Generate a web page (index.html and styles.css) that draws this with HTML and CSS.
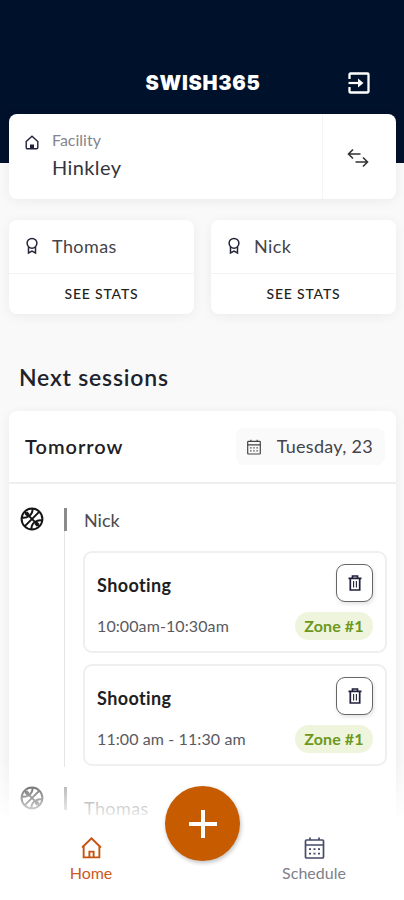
FILE: index.html
```html
<!DOCTYPE html>
<html lang="en">
<head>
    <meta charset="utf-8">
    <meta name="viewport" content="width=device-width, initial-scale=1">
    <title>Swish365</title>
    <link rel="stylesheet" href="styles.css">
</head>
<body>
    <!-- Shared icons -->
    <svg class="sprite" xmlns="http://www.w3.org/2000/svg">
        <symbol id="icon-house" viewBox="0 0 20 21">
            <path d="M1 10 L10 1.2 L19 10 M2.5 8.8 V19.5 H17.5 V8.8 M8 19.5 V14 H12 V19.5" fill="none" stroke="currentColor" stroke-width="1.8"/>
        </symbol>
        <symbol id="icon-house-small" viewBox="0 0 14 15">
            <path d="M1.2 6.500 L7 1.200 L12.800 6.500 V12.500 Q12.800 13.800 11.500 13.800 H2.500 Q1.200 13.800 1.200 12.500 Z" fill="none" stroke="currentColor" stroke-width="1.4"/>
            <path d="M5 14 V9.500 H9 V14 Z" fill="currentColor"/>
        </symbol>
        <symbol id="icon-award" viewBox="0 0 14 18">
            <circle cx="7" cy="6.3" r="4.9" fill="none" stroke="currentColor" stroke-width="1.5"/>
            <path d="M3.5 10 V16 L7 14.2 L10.5 16 V10" fill="none" stroke="currentColor" stroke-width="1.5"/>
        </symbol>
        <symbol id="icon-calendar" viewBox="0 0 20 22">
            <rect x="1" y="3" width="18" height="18" rx="1" fill="none" stroke="currentColor" stroke-width="1.7"/>
            <path d="M5.5 0.5 V3 M14.5 0.5 V3 M1 8 H19" fill="none" stroke="currentColor" stroke-width="1.7"/>
            <path d="M4.5 12.2 H6.5 M9 12.2 H11 M13.5 12.2 H15.5 M4.5 16.7 H6.5 M9 16.7 H11 M13.5 16.7 H15.5" stroke="currentColor" stroke-width="1.8"/>
        </symbol>
        <symbol id="icon-ball" viewBox="0 0 24 24">
            <g fill="none" stroke="currentColor" stroke-width="2">
                <circle cx="12" cy="12" r="10.4"/>
                <path d="M4.6 19.4 L19.400 4.600 M4.600 4.600 L19.400 19.400"/>
                <path d="M1.800 10.500 C6.500 11.500 13 8.500 12.500 1.800 M22.200 13.500 C17.500 12.500 11 15.500 11.500 22.200"/>
            </g>
            <path d="M4.500 7 L7.500 4.500 L9.500 7 L7 9.500 Z M19.500 17 L16.500 19.500 L14.500 17 L17 14.500 Z" fill="currentColor"/>
        </symbol>
        <symbol id="icon-trash" viewBox="0 0 14 16">
            <path d="M0.500 3.300 H13.500 M4.500 3 V1 H9.500 V3 M2.300 3.300 V15 H11.700 V3.300" fill="none" stroke="currentColor" stroke-width="1.7"/>
            <path d="M5.600 6 V12.500 M8.400 6 V12.500" stroke="currentColor" stroke-width="1.1"/>
        </symbol>
    </svg>

    <div class="app">
        <header class="hero">
            <h1 class="logo">SWISH365</h1>
            <svg class="logout" viewBox="0 0 22 22">
                <path d="M1.500 7 V2.500 Q1.500 1.500 2.500 1.500 H19.500 Q20.500 1.500 20.500 2.500 V19.500 Q20.500 20.500 19.500 20.500 H2.500 Q1.500 20.500 1.500 19.500 V15" fill="none" stroke="#fff" stroke-width="2.300"/>
                <path d="M0.500 11 H12" fill="none" stroke="#fff" stroke-width="2.200"/>
                <path d="M10 6.500 L15.500 11 L10 15.500 Z" fill="#fff"/>
            </svg>
        </header>

        <main class="content">
            <section class="card facility">
                <div class="facility-info">
                    <svg class="facility-icon"><use href="#icon-house-small"/></svg>
                    <div>
                        <div class="facility-label">Facility</div>
                        <div class="facility-name">Hinkley</div>
                    </div>
                </div>
                <div class="facility-switch">
                    <svg class="switch-icon" viewBox="0 0 22 20">
                        <path d="M13.500 6 H1.500 M6 1.500 L1.500 6 L6 10.500 M8.500 14 H20.500 M16 9.500 L20.500 14 L16 18.500" fill="none" stroke="#333" stroke-width="1.600"/>
                    </svg>
                </div>
            </section>

            <section class="players">
                <div class="card player">
                    <div class="player-top">
                        <svg class="award-icon"><use href="#icon-award"/></svg>
                        <span class="player-name">Thomas</span>
                    </div>
                    <div class="player-stats">SEE STATS</div>
                </div>
                <div class="card player">
                    <div class="player-top">
                        <svg class="award-icon"><use href="#icon-award"/></svg>
                        <span class="player-name">Nick</span>
                    </div>
                    <div class="player-stats">SEE STATS</div>
                </div>
            </section>

            <h2 class="section-title">Next sessions</h2>

            <section class="card sessions">
                <div class="sessions-header">
                    <span class="sessions-day">Tomorrow</span>
                    <div class="date">
                        <svg class="date-icon"><use href="#icon-calendar"/></svg>
                        <span class="date-text">Tuesday, 23</span>
                    </div>
                </div>

                <div class="group">
                    <svg class="ball-icon"><use href="#icon-ball"/></svg>
                    <div class="group-body">
                        <div class="group-name">Nick</div>
                        <div class="session">
                            <div class="session-row">
                                <span class="session-title">Shooting</span>
                                <button class="delete-btn"><svg class="trash-icon"><use href="#icon-trash"/></svg></button>
                            </div>
                            <div class="session-row">
                                <span class="session-time">10:00am-10:30am</span>
                                <span class="zone">Zone #1</span>
                            </div>
                        </div>
                        <div class="session">
                            <div class="session-row">
                                <span class="session-title">Shooting</span>
                                <button class="delete-btn"><svg class="trash-icon"><use href="#icon-trash"/></svg></button>
                            </div>
                            <div class="session-row">
                                <span class="session-time">11:00 am - 11:30 am</span>
                                <span class="zone">Zone #1</span>
                            </div>
                        </div>
                    </div>
                </div>

                <div class="group group-next">
                    <svg class="ball-icon"><use href="#icon-ball"/></svg>
                    <div class="group-body">
                        <div class="group-name">Thomas</div>
                    </div>
                </div>
            </section>
        </main>

        <nav class="tabbar">
            <div class="tab tab-active">
                <svg class="tab-icon"><use href="#icon-house"/></svg>
                <span>Home</span>
            </div>
            <div class="tab">
                <svg class="tab-icon"><use href="#icon-calendar"/></svg>
                <span>Schedule</span>
            </div>
            <button class="add-btn">
                <svg class="add-icon" viewBox="0 0 28 28"><path d="M14 0 V28 M0 14 H28" stroke="#fff" stroke-width="4"/></svg>
            </button>
        </nav>
    </div>
</body>
</html>
```
FILE: styles.css
```css
* {
    box-sizing: border-box;
}
body {
    margin: 0;
    font-family: Lato, "Open Sans", sans-serif;
    background: #f9f9f9;
    color: #24242c;
}
button {
    padding: 0;
    font: inherit;
}
svg {
    display: block;
    flex: none;
}
.sprite {
    position: absolute;
    width: 0;
    height: 0;
}
.app {
    position: relative;
    height: 900px;
    overflow: hidden;
}

/* Header */
.hero {
    display: grid;
    grid-template-columns: 1fr auto 1fr;
    align-items: center;
    height: 163px;
    padding: 3px 34px 0 36px;
    background: #00112c;
}
.logo {
    grid-column: 2;
    margin: 0;
    font-family: Inter, sans-serif;
    font-size: 20px;
    font-weight: 900;
    line-height: 24px;
    letter-spacing: 0.7px;
    color: #fff;
}
.logout {
    justify-self: end;
    width: 22px;
    height: 22px;
}

/* Cards */
.content {
    margin-top: -49px;
    padding: 0 8px 0 9px;
}
.card {
    background: #fff;
    border-radius: 8px;
    box-shadow: 0 2px 12px rgba(0, 0, 0, 0.06);
}
.facility {
    display: flex;
    height: 85px;
}
.facility-info {
    display: flex;
    flex: 1;
    padding: 16px 0 0 16px;
}
.facility-icon {
    width: 14px;
    height: 15px;
    margin: 5px 13px 0 0;
    color: #20203a;
}
.facility-label {
    font-size: 16px;
    line-height: 20px;
    color: #85858d;
}
.facility-name {
    margin-top: 4px;
    font-size: 20px;
    line-height: 26px;
    letter-spacing: 0.4px;
    color: #35353f;
}
.facility-switch {
    display: flex;
    align-items: center;
    justify-content: center;
    width: 74px;
    padding: 2px 4px 0 0;
    border-left: 1px solid #f5f5f5;
}
.switch-icon {
    width: 22px;
    height: 20px;
}
.players {
    display: grid;
    grid-template-columns: 1fr 1fr;
    gap: 17px;
    margin-top: 21px;
}
.player {
    height: 94px;
}
.player-top {
    display: flex;
    align-items: center;
    height: 54px;
    padding: 0 0 2px 16px;
    border-bottom: 1px solid #f3f3f3;
}
.award-icon {
    width: 14px;
    height: 18px;
    margin-right: 13px;
    color: #25253a;
}
.player-name {
    font-size: 18px;
    letter-spacing: 0.4px;
    color: #44444a;
}
.player-stats {
    font-size: 14px;
    font-weight: 500;
    line-height: 40px;
    letter-spacing: 0.8px;
    text-align: center;
    color: #222;
}
.section-title {
    margin: 48px 0 0 10px;
    font-size: 23px;
    font-weight: 600;
    line-height: 30px;
    letter-spacing: 0.8px;
    color: #20222b;
}

/* Sessions */
.sessions {
    height: 480px;
    margin-top: 19px;
}
.sessions-header {
    display: flex;
    align-items: center;
    justify-content: space-between;
    height: 73px;
    padding: 0 11px 0 16px;
    border-bottom: 2px solid #efefef;
}
.sessions-day {
    padding-bottom: 1px;
    font-size: 20px;
    font-weight: 600;
    letter-spacing: 1px;
    color: #202024;
}
.date {
    display: flex;
    align-items: center;
    height: 37px;
    padding: 0 12px 0 11px;
    border-radius: 8px;
    background: #fafafa;
}
.date-icon {
    width: 14px;
    height: 16px;
    margin-right: 16px;
    color: #444;
}
.date-text {
    padding-bottom: 1px;
    font-size: 18px;
    letter-spacing: 0.3px;
    color: #44444a;
}
.group {
    display: flex;
    padding: 24px 9px 0 11px;
}
.ball-icon {
    width: 24px;
    height: 24px;
    margin: -1px 20px 0 0;
    color: #151515;
}
.group-body {
    flex: 1;
    height: 259px;
    padding-left: 18px;
    border-left: 1px solid #e4e4e4;
}
.group-name {
    margin-left: -19px;
    padding-left: 17px;
    border-left: 3px solid #8b8b8b;
    font-size: 18px;
    line-height: 24px;
    height: 23px;
    color: #4a4a50;
}
.session {
    height: 102px;
    padding: 11px 12px 0 12px;
    border: 2px solid #efefef;
    border-radius: 9px;
}
.group-name + .session {
    margin-top: 20px;
}
.session + .session {
    margin-top: 11px;
}
.session-row {
    display: flex;
    justify-content: space-between;
}
.session-row + .session-row {
    margin-top: 10px;
}
.session-title {
    padding-top: 10px;
    font-size: 18px;
    font-weight: 700;
    line-height: 22px;
    letter-spacing: 0.4px;
    color: #1e1e22;
}
.delete-btn {
    display: flex;
    align-items: center;
    justify-content: center;
    width: 37px;
    height: 38px;
    padding-bottom: 1px;
    border: 1px solid #666;
    border-radius: 9px;
    background: #fff;
    box-shadow: 1px 2px 4px rgba(0, 0, 40, 0.12);
}
.trash-icon {
    width: 14px;
    height: 16px;
    color: #20203a;
}
.session-time {
    font-size: 16px;
    line-height: 28px;
    letter-spacing: 0.1px;
    color: #5a5a5e;
}
.zone {
    width: 78px;
    border-radius: 14px;
    font-size: 16px;
    font-weight: 700;
    line-height: 28px;
    letter-spacing: 0.1px;
    text-align: center;
    background: #eef5dc;
    color: #6c981d;
}
.group-next {
    padding-top: 20px;
}
.group-next .group-body {
    height: 24px;
    border-left-color: transparent;
}
.group-next .group-name {
    line-height: 43px;
    letter-spacing: 0.4px;
}

/* Bottom navigation, fades out the list underneath */
.tabbar {
    position: absolute;
    left: 0;
    right: 0;
    bottom: 0;
    display: grid;
    grid-template-columns: 1fr 1fr;
    height: 140px;
    padding: 77px 0 0;
    background: linear-gradient(rgba(255, 255, 255, 0), rgba(255, 255, 255, 0.85) 54px, #fff 58px);
}
.tab {
    display: flex;
    flex-direction: column;
    align-items: center;
    font-size: 16px;
    line-height: 20px;
    color: #80808a;
}
.tab:first-child {
    padding-right: 20px;
}
.tab:nth-child(2) {
    padding-left: 22px;
}
.tab-active {
    color: #cb5a22;
}
.tab-icon {
    width: 21px;
    height: 22px;
    margin-bottom: 4px;
    color: #454b68;
}
.tab-active .tab-icon {
    color: #c65310;
}
.add-btn {
    position: absolute;
    top: 26px;
    left: 165px;
    display: flex;
    align-items: center;
    justify-content: center;
    width: 75px;
    height: 75px;
    border: 0;
    border-radius: 50%;
    background: #c75b00;
    box-shadow: 1px 2px 4px rgba(0, 0, 0, 0.25);
}
.add-icon {
    width: 28px;
    height: 28px;
}
```
